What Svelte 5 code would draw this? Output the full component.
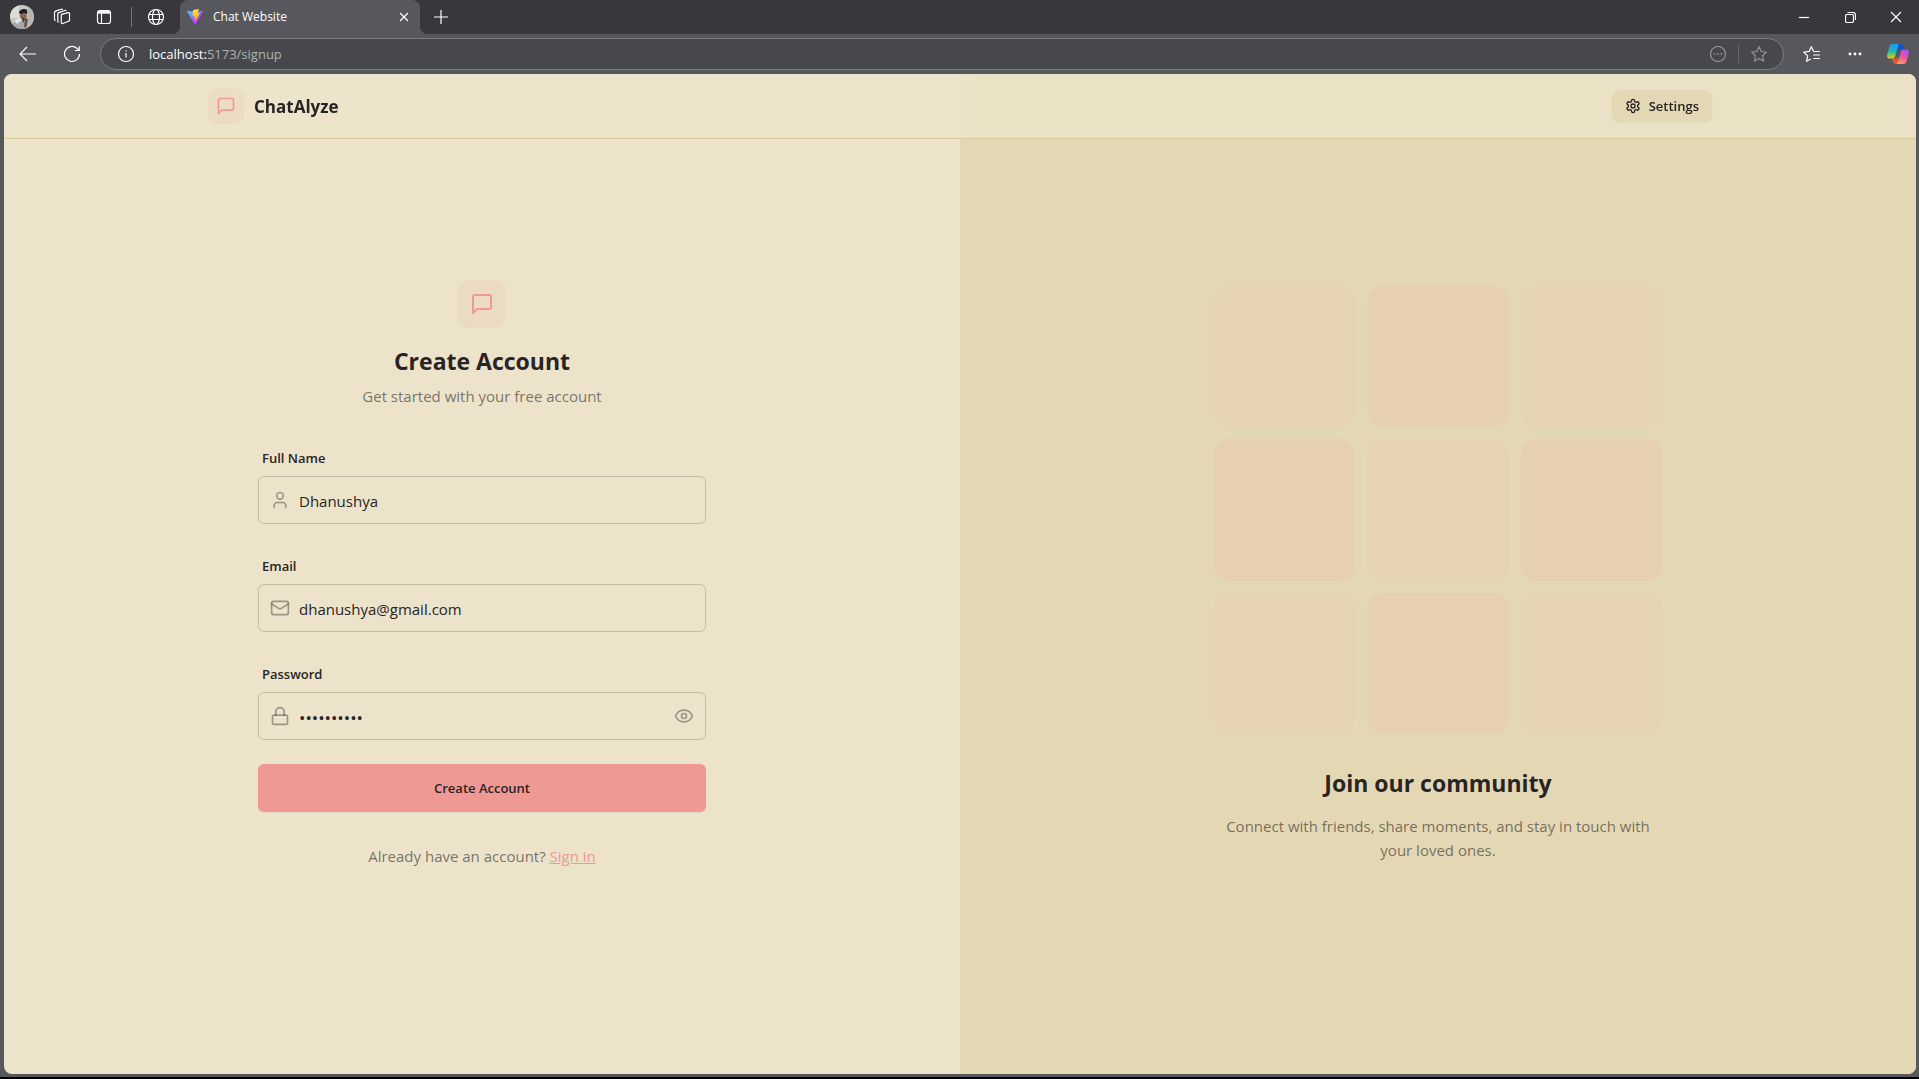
<script lang="ts">
    let fullName = $state("Dhanushya");
    let email = $state("dhanushya@gmail.com");
    let password = $state("chatalyze1");
    let showPassword = $state(false);

    const tiles = Array.from({ length: 9 }, (_, i) => i);

    function submit(e: SubmitEvent) {
        e.preventDefault();
    }
</script>

{#snippet messageIcon(size: number)}
    <svg class="lucide" width={size} height={size} viewBox="0 0 24 24" aria-hidden="true">
        <path d="M21 15a2 2 0 0 1-2 2H7l-4 4V5a2 2 0 0 1 2-2h14a2 2 0 0 1 2 2z" />
    </svg>
{/snippet}

<div class="browser">
    <div class="tab-strip">
        <button class="avatar" aria-label="Profile">
            <svg width="24" height="24" viewBox="0 0 24 24">
                <defs>
                    <clipPath id="avatar-clip"><circle cx="12" cy="12" r="12" /></clipPath>
                </defs>
                <g clip-path="url(#avatar-clip)">
                    <rect width="24" height="24" fill="#c9c9c3" />
                    <rect width="9" height="13" fill="#dcdcd6" />
                    <rect x="18" width="6" height="24" fill="#b7b5ad" />
                    <path d="M2 24 4 16l6-4 5 2 3 10z" fill="#a5a7ab" />
                    <path d="M4 16l6-4 2 3-5 4z" fill="#e2e3e4" />
                    <path d="M10 7h6l1 5-3 3-4-2z" fill="#8e6a52" />
                    <path d="M9 8c0-3 3-4 5-4 3 0 4 2 3 5l-3-1-3 1z" fill="#20222c" />
                    <path d="M15 13l3 1-1 7-3 2z" fill="#6a5146" />
                    <path d="M12 12l3 2-2 4z" fill="#34353b" />
                </g>
            </svg>
        </button>
        <button class="strip-button" aria-label="Workspaces">
            <svg class="line" width="18" height="18" viewBox="0 0 18 18">
                <path d="M8.6 6.4l6.4-1.7c.8-.2 1.5.2 1.5 1v6.2c0 .7-.3 1.2-1 1.4l-5.6 2.2c-.9.3-1.6 0-1.6-.9V7.4c0-.5.2-.9.3-1z" />
                <path d="M5.8 14.2c-.6 0-1-.4-1-1V6.2c0-.9.3-1.3 1-1.6l5.9-2.1c.8-.3 1.5 0 1.6.6" />
                <path d="M2.7 12.4c-.8 0-1.2-.5-1.2-1.2V4.7c0-.8.3-1.3 1-1.6L8 1.2c.7-.3 1.4-.1 1.7.4" />
            </svg>
        </button>
        <button class="strip-button" aria-label="Tab actions">
            <svg class="line" width="16" height="16" viewBox="0 0 16 16">
                <rect x="1.5" y="1.5" width="13" height="13" rx="2.5" />
                <path d="M2 3.4h12" stroke-width="2.6" />
                <path d="M5.5 4v10.500" />
            </svg>
        </button>
        <span class="strip-divider"></span>
        <button class="strip-button globe" aria-label="Pinned tab">
            <svg class="line" width="18" height="18" viewBox="0 0 18 18">
                <circle cx="9" cy="9" r="7.5" />
                <ellipse cx="9" cy="9" rx="3.5" ry="7.5" />
                <path d="M2 6.5h14M2 11.5h14" />
            </svg>
        </button>
        <div class="tab">
            <svg width="16" height="16" viewBox="0 0 256 257" aria-hidden="true">
                <defs>
                    <linearGradient id="vite-a" x1="0" x2=".58" y1=".08" y2=".79">
                        <stop offset="0" stop-color="#41d1ff" />
                        <stop offset="1" stop-color="#bd34fe" />
                    </linearGradient>
                    <linearGradient id="vite-b" x1=".43" x2=".5" y1=".02" y2=".89">
                        <stop offset="0" stop-color="#ffea83" />
                        <stop offset=".08" stop-color="#ffdd35" />
                        <stop offset="1" stop-color="#ffa800" />
                    </linearGradient>
                </defs>
                <path fill="url(#vite-a)" d="M255.153 37.938L134.897 252.976c-2.483 4.44-8.862 4.466-11.382.048L.875 37.958c-2.746-4.814 1.371-10.646 6.827-9.67l120.385 21.517a6.537 6.537 0 0 0 2.322-.004l117.867-21.483c5.438-.991 9.574 4.796 6.877 9.62Z" />
                <path fill="url(#vite-b)" d="M185.432.063L96.44 17.501a3.268 3.268 0 0 0-2.634 3.014l-5.474 92.456a3.268 3.268 0 0 0 3.997 3.378l24.777-5.718c2.318-.535 4.413 1.507 3.936 3.838l-7.361 36.047c-.495 2.426 1.782 4.5 4.151 3.78l15.304-4.649c2.372-.72 4.652 1.36 4.15 3.788l-11.698 56.621c-.732 3.542 3.979 5.473 5.943 2.437l1.313-2.028l72.516-144.72c1.215-2.423-.88-5.186-3.54-4.672l-25.505 4.922c-2.396.462-4.435-1.77-3.759-4.114l16.646-57.705c.677-2.35-1.37-4.583-3.769-4.113Z" />
            </svg>
            <span class="tab-title">Chat Website</span>
            <button class="tab-close" aria-label="Close tab">
                <svg class="line" width="10" height="10" viewBox="0 0 10 10"><path d="M1 1l8 8M9 1l-8 8" /></svg>
            </button>
        </div>
        <button class="strip-button" aria-label="New tab">
            <svg class="line" width="14" height="14" viewBox="0 0 14 14"><path d="M7 0v14M0 7h14" /></svg>
        </button>
        <div class="window-controls">
            <button aria-label="Minimize">
                <svg class="line" width="10" height="10" viewBox="0 0 10 10"><path d="M0 5.5h10" /></svg>
            </button>
            <button aria-label="Restore">
                <svg class="line" width="11" height="11" viewBox="0 0 11 11">
                    <rect x=".5" y="2.5" width="8" height="8" rx="1.5" />
                    <path d="M2.5 .5H8a2.500 2.500 0 0 1 2.500 2.500v5" />
                </svg>
            </button>
            <button aria-label="Close">
                <svg class="line" width="12" height="12" viewBox="0 0 12 12"><path d="M1 1l10 10M11 1L1 11" /></svg>
            </button>
        </div>
    </div>

    <div class="toolbar">
        <button aria-label="Back">
            <svg class="line" width="18" height="16" viewBox="0 0 18 16"><path d="M17 8H1.5M8 1L1 8l7 7" /></svg>
        </button>
        <button aria-label="Refresh">
            <svg class="line" width="18" height="18" viewBox="0 0 18 18">
                <path d="M16.5 9a7.5 7.5 0 1 1-2.6-5.700l1.900 1.900M16.300 1.200v4.300h-4.500" />
            </svg>
        </button>
        <div class="address-bar">
            <svg class="line" width="18" height="18" viewBox="0 0 18 18" aria-hidden="true">
                <circle cx="9" cy="9" r="7.5" />
                <path d="M9 8v4.5M9 5.2v1.3" />
            </svg>
            <div class="url" role="textbox" tabindex="0" aria-label="Address">localhost:<span>5173/signup</span></div>
            <div class="address-actions">
                <svg class="line" width="16" height="16" viewBox="0 0 16 16" aria-hidden="true">
                    <circle cx="8" cy="8" r="7.5" />
                    <path d="M3.8 8h1.600M7.200 8h1.600M10.600 8h1.600" stroke-width="1.6" />
                </svg>
                <span class="address-divider"></span>
                <svg class="line" width="16" height="16" viewBox="0 0 16 16" aria-hidden="true">
                    <path d="M8 .8l2.200 4.700 5.100.7-3.700 3.600.9 5.200L8 12.500 3.500 15l.9-5.200L.7 6.200l5.100-.7z" />
                </svg>
            </div>
        </div>
        <button aria-label="Favorites">
            <svg class="line" width="17" height="16" viewBox="0 0 17 16">
                <path d="M10.6 5.400 8.400 .8 6.100 5.400l-5.400.8 3.900 3.700-.9 5.300 4.100-2.200" />
                <path d="M10.3 5.500h6.500M10.300 9h6.500M10.300 12.500h6.500" />
            </svg>
        </button>
        <button aria-label="More">
            <svg width="14" height="4" viewBox="0 0 14 4" fill="#fff">
                <circle cx="2" cy="2" r="1.4" /><circle cx="7" cy="2" r="1.4" /><circle cx="12" cy="2" r="1.4" />
            </svg>
        </button>
        <button class="copilot" aria-label="Copilot">
            <svg width="22" height="20" viewBox="0 0 22 20">
                <defs>
                    <linearGradient id="cp-a" x1="0" x2="0" y1="0" y2="1">
                        <stop offset="0" stop-color="#1a9df0" />
                        <stop offset=".5" stop-color="#1fb6b8" />
                        <stop offset=".8" stop-color="#8bcb4a" />
                        <stop offset="1" stop-color="#f5c51c" />
                    </linearGradient>
                    <linearGradient id="cp-b" x1=".6" x2=".2" y1="0" y2="1">
                        <stop offset="0" stop-color="#a750ef" />
                        <stop offset=".5" stop-color="#f0569c" />
                        <stop offset="1" stop-color="#ffa45c" />
                    </linearGradient>
                </defs>
                <path d="M11 0h2.500c1.300 0 2 .8 2.400 2l1 3.500h-3.400c-1.500 0-2.300.8-2.700 2.200z" fill="#1650c8" />
                <path d="M11 20H8.500c-1.300 0-2-.8-2.400-2l-1-3.500h3.400c1.500 0 2.300-.8 2.700-2.200z" fill="#ee5331" />
                <path d="M5.500 0h7.300c-1 .3-1.500 1.200-1.900 2.500L8.300 12c-.5 1.700-1.300 2.500-3 2.500H2.800C.6 14.500-.4 13 .2 10.700L2.300 3C2.900 1 3.800 0 5.500 0z" fill="url(#cp-a)" />
                <path d="M16.500 20H9.200c1-.3 1.500-1.200 1.900-2.500L13.700 8c.5-1.700 1.300-2.500 3-2.500h2.500c2.200 0 3.200 1.500 2.600 3.800L19.700 17c-.6 2-1.500 3-3.200 3z" fill="url(#cp-b)" />
            </svg>
        </button>
    </div>

    <div class="page">
        <header>
            <div class="container">
                <a class="brand" href="/">
                    <span class="brand-icon">{@render messageIcon(20)}</span>
                    <span class="brand-name">ChatAlyze</span>
                </a>
                <a class="settings" href="/settings">
                    <svg class="lucide" width="16" height="16" viewBox="0 0 24 24" aria-hidden="true">
                        <path d="M12.22 2h-.44a2 2 0 0 0-2 2v.18a2 2 0 0 1-1 1.73l-.43.25a2 2 0 0 1-2 0l-.15-.08a2 2 0 0 0-2.73.73l-.22.38a2 2 0 0 0 .73 2.73l.15.1a2 2 0 0 1 1 1.72v.51a2 2 0 0 1-1 1.74l-.15.09a2 2 0 0 0-.73 2.73l.22.38a2 2 0 0 0 2.73.73l.15-.08a2 2 0 0 1 2 0l.43.25a2 2 0 0 1 1 1.73V20a2 2 0 0 0 2 2h.44a2 2 0 0 0 2-2v-.18a2 2 0 0 1 1-1.73l.43-.25a2 2 0 0 1 2 0l.15.08a2 2 0 0 0 2.73-.73l.22-.39a2 2 0 0 0-.73-2.73l-.15-.08a2 2 0 0 1-1-1.74v-.5a2 2 0 0 1 1-1.74l.15-.09a2 2 0 0 0 .73-2.73l-.22-.38a2 2 0 0 0-2.73-.73l-.15.08a2 2 0 0 1-2 0l-.43-.25a2 2 0 0 1-1-1.73V4a2 2 0 0 0-2-2z" />
                        <circle cx="12" cy="12" r="3" />
                    </svg>
                    <span>Settings</span>
                </a>
            </div>
        </header>

        <main>
            <section class="signup">
                <div class="signup-box">
                    <div class="intro">
                        <div class="intro-icon">{@render messageIcon(24)}</div>
                        <h1>Create Account</h1>
                        <p>Get started with your free account</p>
                    </div>

                    <form onsubmit={submit}>
                        <div class="control">
                            <label for="full-name">Full Name</label>
                            <div class="field">
                                <svg class="lucide" width="20" height="20" viewBox="0 0 24 24" aria-hidden="true">
                                    <path d="M19 21v-2a4 4 0 0 0-4-4H9a4 4 0 0 0-4 4v2" />
                                    <circle cx="12" cy="7" r="4" />
                                </svg>
                                <input id="full-name" type="text" bind:value={fullName} />
                            </div>
                        </div>
                        <div class="control">
                            <label for="email">Email</label>
                            <div class="field">
                                <svg class="lucide" width="20" height="20" viewBox="0 0 24 24" aria-hidden="true">
                                    <rect width="20" height="16" x="2" y="4" rx="2" />
                                    <path d="m22 7-8.97 5.7a1.94 1.94 0 0 1-2.06 0L2 7" />
                                </svg>
                                <input id="email" type="email" bind:value={email} />
                            </div>
                        </div>
                        <div class="control">
                            <label for="password">Password</label>
                            <div class="field">
                                <svg class="lucide" width="20" height="20" viewBox="0 0 24 24" aria-hidden="true">
                                    <rect width="18" height="11" x="3" y="11" rx="2" />
                                    <path d="M7 11V7a5 5 0 0 1 10 0v4" />
                                </svg>
                                <input
                                    id="password"
                                    class:masked={!showPassword}
                                    type={showPassword ? "text" : "password"}
                                    bind:value={password}
                                />
                                <button type="button" aria-label="Show password" onclick={() => (showPassword = !showPassword)}>
                                    <svg class="lucide" width="20" height="20" viewBox="0 0 24 24">
                                        <path d="M2.062 12.348a1 1 0 0 1 0-.696 10.75 10.75 0 0 1 19.876 0 1 1 0 0 1 0 .696 10.75 10.75 0 0 1-19.876 0" />
                                        <circle cx="12" cy="12" r="3" />
                                    </svg>
                                </button>
                            </div>
                        </div>
                        <button class="submit" type="submit">Create Account</button>
                    </form>

                    <p class="signin">Already have an account? <a href="/login">Sign in</a></p>
                </div>
            </section>

            <section class="community">
                <div class="community-box">
                    <div class="tiles">
                        {#each tiles as i}
                            <div class="tile" class:soft={i % 2 === 0}></div>
                        {/each}
                    </div>
                    <h2>Join our community</h2>
                    <p>Connect with friends, share moments, and stay in touch with your loved ones.</p>
                </div>
            </section>
        </main>
    </div>
</div>

<style>
    :global(body) {
        background: #000;
    }

    .browser {
        --base-100: #ece3ca;
        --base-200: #e4d8b4;
        --base-300: #dbca9a;
        --content: #282425;
        --primary: #ef9995;

        display: flex;
        flex-direction: column;
        box-sizing: border-box;
        min-height: calc(100vh - 2px);
        padding-bottom: 3px;
        background: #57585d;
        font-family: "Segoe UI", "Open Sans", "Noto Sans", sans-serif;
        font-size: 15px;
        line-height: 24px;
        color: var(--content);
    }

    .browser * {
        box-sizing: border-box;
    }

    button {
        display: flex;
        align-items: center;
        justify-content: center;
        padding: 0;
        border: 0;
        background: none;
        font: inherit;
        color: inherit;
        cursor: pointer;
    }

    svg {
        display: block;
        flex: none;
    }

    .line {
        fill: none;
        stroke: currentColor;
        stroke-width: 1.2;
    }

    .lucide {
        fill: none;
        stroke: currentColor;
        stroke-width: 2;
        stroke-linecap: round;
        stroke-linejoin: round;
    }

    h1,
    h2,
    p {
        margin: 0;
    }

    /* browser chrome */
    .tab-strip {
        display: flex;
        align-items: center;
        height: 34px;
        padding-left: 10px;
        background: #37383c;
        color: #fff;
    }

    .avatar {
        margin-right: 7px;
    }

    .strip-button {
        width: 42px;
        height: 34px;
    }

    .strip-button.globe {
        width: 36px;
    }

    .strip-divider {
        width: 1px;
        height: 20px;
        margin: 0 6px;
        background: #75767a;
    }

    .tab {
        position: relative;
        display: flex;
        align-items: center;
        gap: 10px;
        width: 240px;
        height: 34px;
        margin-left: 6px;
        padding: 0 4px 0 7px;
        border-radius: 8px 8px 0 0;
        background: #57585d;
    }

    .tab::before,
    .tab::after {
        content: "";
        position: absolute;
        bottom: 0;
        width: 8px;
        height: 8px;
    }

    .tab::before {
        right: 100%;
        background: radial-gradient(circle at 0 0, transparent 8px, #57585d 8px);
    }

    .tab::after {
        left: 100%;
        background: radial-gradient(circle at 100% 0, transparent 8px, #57585d 8px);
    }

    .tab-title {
        flex: 1;
        font-size: 12px;
        line-height: 16px;
    }

    .tab-close {
        width: 24px;
        height: 24px;
    }

    .window-controls {
        display: flex;
        margin-left: auto;
    }

    .window-controls button {
        width: 46px;
        height: 34px;
    }

    .toolbar {
        display: flex;
        align-items: center;
        height: 40px;
        padding-left: 6px;
        color: #fff;
    }

    .toolbar button {
        width: 44px;
        height: 32px;
    }

    .toolbar .copilot {
        width: 42px;
    }

    .address-bar {
        flex: 1;
        display: flex;
        align-items: center;
        gap: 14px;
        height: 32px;
        margin: 0 5px 0 6px;
        padding: 0 16px;
        border: 1px solid #7b7c80;
        border-radius: 16px;
        background: #47484b;
    }

    .url {
        flex: 1;
        font-size: 13px;
        line-height: 20px;
        outline: none;
    }

    .url span {
        color: #b0b1b3;
    }

    .address-actions {
        display: flex;
        align-items: center;
        gap: 12px;
        color: #939497;
    }

    .address-divider {
        width: 1px;
        height: 18px;
        background: #66676b;
    }

    /* page */
    .page {
        position: relative;
        flex: 1;
        display: flex;
        flex-direction: column;
        margin: 0 3px 0 4px;
        border-radius: 8px;
        background: var(--base-100);
        overflow: hidden;
    }

    header {
        position: absolute;
        top: 0;
        left: 0;
        right: 0;
        z-index: 1;
        border-bottom: 1px solid var(--base-300);
        background: rgba(236, 227, 202, 0.8);
        backdrop-filter: blur(16px);
    }

    .container {
        display: flex;
        align-items: center;
        justify-content: space-between;
        max-width: 1536px;
        height: 64px;
        margin: 0 auto;
        padding: 0 16px;
    }

    .brand {
        display: flex;
        align-items: center;
        gap: 10px;
        color: inherit;
        text-decoration: none;
    }

    .brand-icon,
    .intro-icon {
        display: flex;
        align-items: center;
        justify-content: center;
        width: 36px;
        height: 36px;
        border-radius: 8px;
        background: rgba(239, 153, 149, 0.1);
        color: var(--primary);
    }

    .brand-name {
        padding-top: 2px;
        font-size: 17px;
        font-weight: 700;
    }

    .settings {
        display: flex;
        align-items: center;
        gap: 8px;
        height: 32px;
        padding: 0 13px;
        border-radius: 8px;
        background: var(--base-200);
        box-shadow: 0 1px 2px rgba(0, 0, 0, 0.05);
        color: inherit;
        font-size: 13px;
        font-weight: 600;
        text-decoration: none;
    }

    main {
        flex: 1;
        display: grid;
        grid-template-columns: 1fr 1fr;
    }

    .signup,
    .community {
        display: flex;
        align-items: center;
        justify-content: center;
    }

    .community {
        background: var(--base-200);
        text-align: center;
    }

    .signup-box,
    .community-box {
        width: 100%;
        max-width: 448px;
    }

    .intro {
        display: flex;
        flex-direction: column;
        align-items: center;
        gap: 8px;
        margin-bottom: 32px;
    }

    .intro-icon {
        width: 48px;
        height: 48px;
        margin-bottom: 8px;
        border-radius: 12px;
    }

    h1,
    h2 {
        padding-top: 2px;
        font-size: 23px;
        line-height: 30px;
        font-weight: 700;
    }

    p {
        color: rgba(40, 36, 37, 0.6);
    }

    form {
        display: flex;
        flex-direction: column;
        gap: 24px;
    }

    label {
        display: block;
        padding: 8px 4px;
        font-size: 13px;
        line-height: 20px;
        font-weight: 600;
    }

    .field {
        display: flex;
        align-items: center;
        gap: 9px;
        height: 48px;
        padding: 0 11px;
        border: 1px solid rgba(40, 36, 37, 0.2);
        border-radius: 6px;
        color: rgba(40, 36, 37, 0.4);
    }

    .field input {
        flex: 1;
        min-width: 0;
        height: 46px;
        padding: 2px 0 0;
        border: 0;
        outline: none;
        background: none;
        font: inherit;
        color: var(--content);
    }

    .field .masked {
        font-size: 17px;
    }

    .submit {
        height: 48px;
        border-radius: 6px;
        background: var(--primary);
        box-shadow: 0 1px 2px rgba(0, 0, 0, 0.05);
        font-size: 13px;
        font-weight: 600;
    }

    .signin {
        margin-top: 32px;
        text-align: center;
    }

    .signin a {
        color: var(--primary);
    }

    .tiles {
        display: grid;
        grid-template-columns: repeat(3, 1fr);
        gap: 12px;
        margin-bottom: 32px;
    }

    .tile {
        aspect-ratio: 1;
        border-radius: 16px;
        background: #e6d0b1;
    }

    .tile.soft {
        background: #e5d3b2;
    }

    h2 {
        margin-bottom: 16px;
    }
</style>
